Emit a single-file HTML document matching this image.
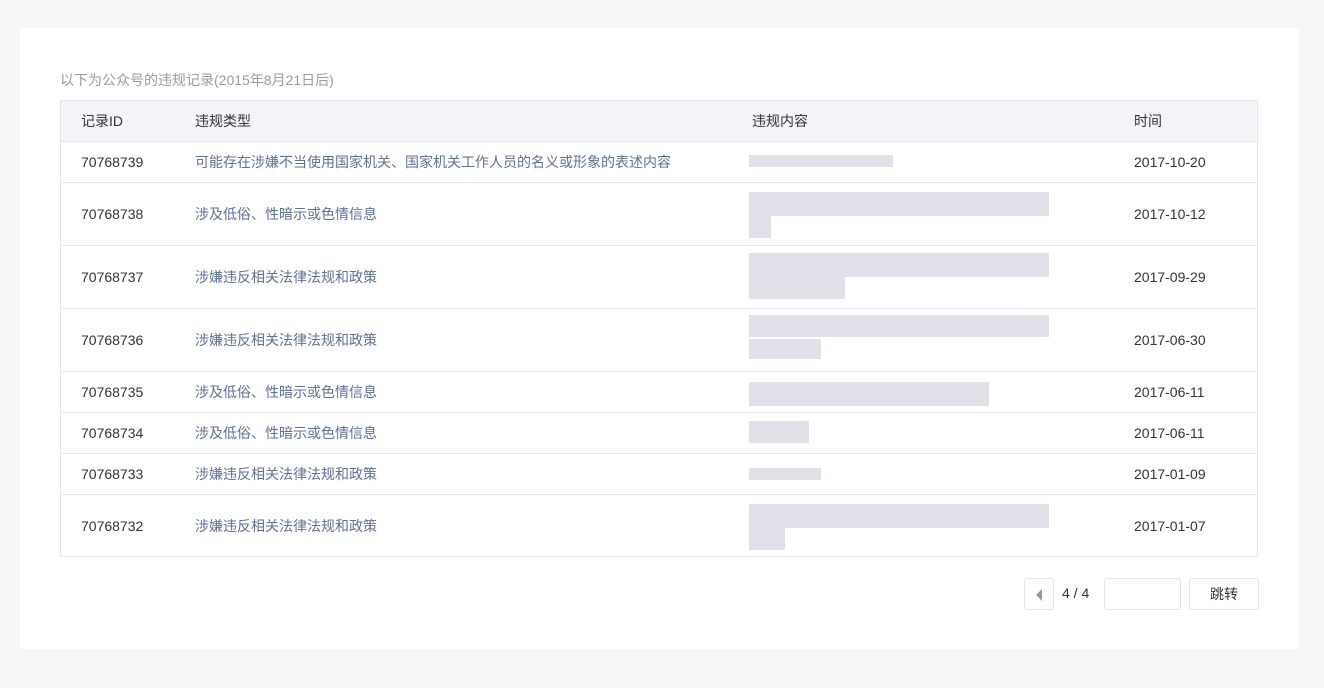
<!DOCTYPE html>
<html><head><meta charset="utf-8"><style>
*{margin:0;padding:0;box-sizing:border-box}
body{width:1324px;height:688px;background:#f6f7f9;font-family:"Liberation Sans","Noto Sans CJK SC",sans-serif;position:relative;overflow:hidden}
.card{position:absolute;left:20px;top:28px;width:1279px;height:621px;background:#fff;border-radius:3px}
.note{position:absolute;left:60px;top:70px;font-size:14px;color:#9a9a9a}
.tbl{position:absolute;left:60px;top:100px;width:1198px;border:1px solid #e5e6e9}
.row{position:relative;border-top:1px solid #e5e6e9;font-size:14px;color:#333}
.row:first-child{border-top:none}
.hd{background:#f4f5f8;height:40px}
.row span{position:absolute;top:50%;transform:translateY(-50%);white-space:nowrap}
.c1{left:20px}.c2{left:134px}.c4{left:1073px}
.row .t{color:#5f7092;font-size:14px}
.b{position:absolute;background:#e0e0e9}
.pg{position:absolute;border:1px solid #e3e3e3;border-radius:3px;background:#fff}
</style></head><body>
<div class="card"></div>
<div class="note">以下为公众号的违规记录(2015年8月21日后)</div>
<div class="tbl">
<div class="row hd"><span class="c1">记录ID</span><span class="c2">违规类型</span><span style="left:691px">违规内容</span><span class="c4">时间</span></div>
<div class="row" style="height:41px"><span class="c1">70768739</span><span class="c2 t">可能存在涉嫌不当使用国家机关、国家机关工作人员的名义或形象的表述内容</span><span class="c4">2017-10-20</span><div class="b" style="left:688px;top:13px;width:144px;height:12px"></div></div>
<div class="row" style="height:63px"><span class="c1">70768738</span><span class="c2 t">涉及低俗、性暗示或色情信息</span><span class="c4">2017-10-12</span><div class="b" style="left:688px;top:9px;width:300px;height:24px"></div><div class="b" style="left:688px;top:33px;width:22px;height:22px"></div></div>
<div class="row" style="height:63px"><span class="c1">70768737</span><span class="c2 t">涉嫌违反相关法律法规和政策</span><span class="c4">2017-09-29</span><div class="b" style="left:688px;top:7px;width:300px;height:24px"></div><div class="b" style="left:688px;top:31px;width:96px;height:22px"></div></div>
<div class="row" style="height:63px"><span class="c1">70768736</span><span class="c2 t">涉嫌违反相关法律法规和政策</span><span class="c4">2017-06-30</span><div class="b" style="left:688px;top:6px;width:300px;height:22px"></div><div class="b" style="left:688px;top:30px;width:72px;height:20px"></div></div>
<div class="row" style="height:41px"><span class="c1">70768735</span><span class="c2 t">涉及低俗、性暗示或色情信息</span><span class="c4">2017-06-11</span><div class="b" style="left:688px;top:10px;width:240px;height:24px"></div></div>
<div class="row" style="height:41px"><span class="c1">70768734</span><span class="c2 t">涉及低俗、性暗示或色情信息</span><span class="c4">2017-06-11</span><div class="b" style="left:688px;top:8px;width:60px;height:22px"></div></div>
<div class="row" style="height:41px"><span class="c1">70768733</span><span class="c2 t">涉嫌违反相关法律法规和政策</span><span class="c4">2017-01-09</span><div class="b" style="left:688px;top:14px;width:72px;height:12px"></div></div>
<div class="row" style="height:62px"><span class="c1">70768732</span><span class="c2 t">涉嫌违反相关法律法规和政策</span><span class="c4">2017-01-07</span><div class="b" style="left:688px;top:9px;width:300px;height:24px"></div><div class="b" style="left:688px;top:33px;width:36px;height:22px"></div></div>
</div>
<div class="pg" style="left:1024px;top:578px;width:30px;height:32px"><div style="position:absolute;left:11px;top:10px;width:0;height:0;border-top:6px solid transparent;border-bottom:6px solid transparent;border-right:6px solid #999"></div></div>
<div style="position:absolute;left:1062px;top:585px;font-size:14px;color:#333">4 / 4</div>
<div class="pg" style="left:1104px;top:578px;width:77px;height:32px"></div>
<div class="pg" style="left:1189px;top:578px;width:70px;height:32px;font-size:14px;color:#333;text-align:center;line-height:30px">跳转</div>
</body></html>
